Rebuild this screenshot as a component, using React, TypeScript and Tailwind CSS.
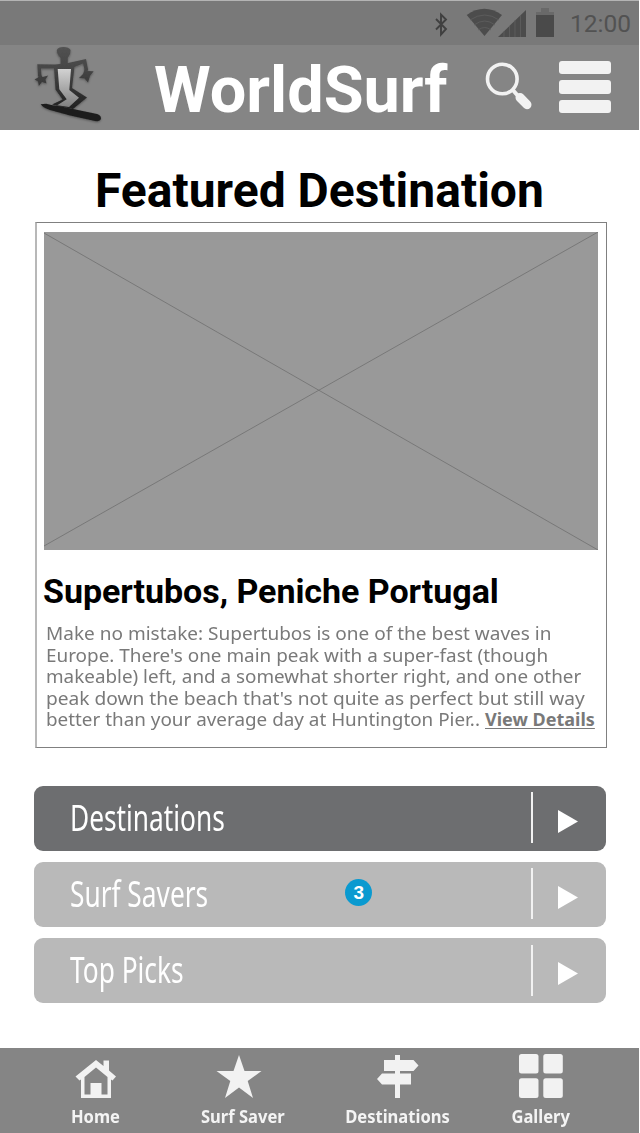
import type { ReactNode } from "react";

function Surfer() {
  return (
    <svg className="h-[85px] w-[80px] shrink-0" viewBox="30 45 80 85">
      <defs>
        <linearGradient id="body" gradientUnits="userSpaceOnUse" x1="0" y1="47" x2="0" y2="108">
          <stop offset="0" stopColor="#525252" />
          <stop offset="0.4" stopColor="#444" />
          <stop offset="1" stopColor="#222" />
        </linearGradient>
        <linearGradient id="belly" x1="0" y1="0" x2="0" y2="1">
          <stop offset="0" stopColor="#d2d2d2" />
          <stop offset="1" stopColor="#808080" />
        </linearGradient>
        <filter id="shade" x="-20%" y="-20%" width="140%" height="140%">
          <feDropShadow dx="0" dy="1" stdDeviation="1" floodColor="#000" floodOpacity="0.35" />
        </filter>
      </defs>
      <g filter="url(#shade)">
        <g fill="url(#body)">
          <path d="M56.800 50Q58 47 63.500 47T70.600 50Q71 54 67.800 58V64H60.500V58Q56.500 54 56.800 50z" />
          <path d="M37.300 64.200L55 64.500 67 63.200 86 59 88.200 70 84.800 71 83 63.500 74.500 67 72 88 87 97.500 73 109 52 104.500 62.500 99.500 55.500 89.500 54 68.500 41 68.500 41.500 76 38 76z" />
          <path d="M39.500 73L42.500 77 48.200 75.500 45.500 79.500 46.500 83.500 42 82 38.800 86 38 81.500 34.500 79.500 38 77.500z" />
          <path d="M85.500 67L88 71 93.700 71.300 90 76 88 82.500 84.500 78.500 79 78 83 74z" />
        </g>
        <path fill="#1d1d1d" d="M40.700 104.300L46 103.800Q52 105.500 60 106.200L97 114Q101 115 101 118.500 100 121.800 95 121L70 115.500 50 110Q43 108 40.700 104.300z" />
      </g>
      <path fill="url(#belly)" d="M57.700 69H71L69.300 90 79 97.700 69 107 57.300 105.300 66.700 99.300 59.300 89.300z" />
    </svg>
  );
}

function StatusIcons() {
  return (
    <svg className="h-[45px] w-[130px]" viewBox="430 0 130 45">
      <path d="M436 19l10 10-5 5.500v-20l5 5-10 10" fill="none" stroke="#404040" strokeWidth="1.900" />
      <path d="M466.700 15q17.500-12.500 35.300 0l-17.500 21z" fill="#4c4c4c" />
      <path d="M470 20q15-10 29 0M474 25q11-8 21 0M478 30q7-5 13 0" fill="none" stroke="#5f5f5f" strokeWidth="0.800" />
      <path d="M498 37l28-27v27z" fill="#4c4c4c" />
      <path d="M504 31v6M509.500 26v11M515 20v17M520.500 15v22" stroke="#5f5f5f" strokeWidth="0.800" />
      <path d="M536 12h18v25h-18z" fill="#4a4a4a" />
      <path d="M541 8h8v4h5v3h-18v-3h5z" fill="#696969" />
    </svg>
  );
}

function SearchIcon() {
  return (
    <svg className="h-[52px] w-[50px]" viewBox="484 58 50 52">
      <circle cx="502.300" cy="79" r="14.800" fill="none" stroke="#f2f2f2" strokeWidth="3.600" />
      <path d="M512 89l6 7" stroke="#f2f2f2" strokeWidth="4" />
      <path d="M520 97.500l7 7.200" stroke="#f2f2f2" strokeWidth="9" strokeLinecap="round" />
    </svg>
  );
}

function MenuIcon() {
  return (
    <div className="flex w-[52px] flex-col gap-[6px]">
      <span className="h-[13.300px] rounded-[3px] bg-[#f2f2f2]" />
      <span className="h-[13.300px] rounded-[3px] bg-[#f2f2f2]" />
      <span className="h-[13.300px] rounded-[3px] bg-[#f2f2f2]" />
    </div>
  );
}

function Header() {
  return (
    <header className="mr-px h-[130px] border-t border-[#b4b4b4] bg-[#858585]">
      <div className="flex h-[44px] items-center justify-end bg-[#797979] pr-[9px]">
        <div className="-mt-px mr-[10px] h-[45px]"><StatusIcons /></div>
        <span className="mt-[1px] w-[60px] whitespace-nowrap font-[Roboto,sans-serif] text-[24.500px] leading-[30px] text-[#525252]">12:00</span>
      </div>
      <div className="flex h-[85px] items-start pl-[30px]">
        <Surfer />
        <h1 className="mt-[7px] ml-[44px] w-[300px] whitespace-nowrap font-[Roboto,sans-serif] text-[64.800px] leading-[76px] font-bold text-white">WorldSurf</h1>
        <div className="mt-[13px] ml-[30px]"><SearchIcon /></div>
        <div className="mt-[16px] ml-[25px]"><MenuIcon /></div>
      </div>
    </header>
  );
}

function Featured() {
  const line = "block w-max origin-left whitespace-nowrap";
  return (
    <section>
      <h2 className="mt-[33px] ml-[95px] h-[59px] whitespace-nowrap font-[Roboto,sans-serif] text-[48px] leading-[56px] font-bold text-black">Featured Destination</h2>
      <article className="ml-[35px] h-[526px] w-[572px] border border-l-2 border-[#808080] border-l-[#b8b8b8] pt-[9px] pl-[7px]">
        <svg className="block h-[318px] w-[554px] bg-[#999]" viewBox="0 0 554 318">
          <path d="M0 1l554 317M0 314L554 0" stroke="#707070" strokeWidth="0.800" />
        </svg>
        <h3 className="mt-[20px] -ml-px h-[43px] whitespace-nowrap font-[Roboto,sans-serif] text-[34px] leading-[42px] font-bold tracking-[-0.040px] text-black">Supertubos, Peniche Portugal</h3>
        <div className="mt-[10px] ml-[2px] font-['Noto_Sans',sans-serif] text-[18px] leading-[21.600px] text-[#797979]">
          <span className={`${line} scale-x-[1.056]`}>Make no mistake: Supertubos is one of the best waves in</span>
          <span className={`${line} scale-x-[1.050]`}>Europe. There's one main peak with a super-fast (though</span>
          <span className={`${line} scale-x-[1.047]`}>makeable) left, and a somewhat shorter right, and one other</span>
          <span className={`${line} scale-x-[1.063]`}>peak down the beach that's not quite as perfect but still way</span>
          <div className="flex">
            <span className="w-[439px]"><span className={`${line} scale-x-[1.048]`}>better than your average day at Huntington Pier..</span></span>
            <a className="font-bold whitespace-nowrap underline decoration-1 underline-offset-2">View Details</a>
          </div>
        </div>
      </article>
    </section>
  );
}

function MenuRow({ label, dark = false, badge }: { label: string; dark?: boolean; badge?: string }) {
  return (
    <div className={`flex h-[64.500px] w-[572px] items-center rounded-[9px] ${dark ? "bg-[#6d6e70]" : "bg-[#b9b9b9]"}`}>
      <div className="w-[311px] pl-[36px]">
        <span className="-mt-[3px] block w-max origin-left scale-x-[0.740] whitespace-nowrap font-['Noto_Sans',sans-serif] text-[35.500px] leading-[48px] text-white">{label}</span>
      </div>
      <div className="w-[186px]">
        {badge && (
          <span className="-mt-[4px] flex size-[27px] items-center justify-center rounded-full bg-[#0a9ad0] font-['Liberation_Sans',sans-serif] text-[19px] leading-none font-bold text-white">{badge}</span>
        )}
      </div>
      <span className="-mt-px h-[51px] w-[1.500px] bg-[#f2f2f2]" />
      <svg className="mt-[6px] ml-[25px] h-[23px] w-[20px]" viewBox="0 0 20 23">
        <path d="M0 0l20 11.500L0 23z" fill="white" />
      </svg>
    </div>
  );
}

function NavItem({ label, children, className }: { label: string; children: ReactNode; className: string }) {
  return (
    <a className={`flex flex-col items-center ${className}`}>
      {children}
      <span className="mt-[1px] block w-max scale-x-[0.895] whitespace-nowrap font-['Noto_Sans',sans-serif] text-[18.500px] leading-[26px] font-bold text-[#f4f4f4]">{label}</span>
    </a>
  );
}

function BottomNav() {
  return (
    <nav className="mt-[45.100px] mr-px flex h-[86px] bg-[#858585] pt-[5px]">
      <NavItem label="Home" className="ml-[35px] w-[121px]">
        <svg className="h-[49px] w-[44px]" viewBox="74 1053 44 49">
          <path fill="#f2f2f2" fillRule="evenodd" d="M96 1060l7.500 6v-5.500h5.500v10l7 6-3.500 4-1.500-1v18.500H81v-18.500l-1.500 1-4-4zm0 7.500l-11.500 9.500v17.500h6v-11.500h11v11.500h6v-17.500z" />
        </svg>
      </NavItem>
      <NavItem label="Surf Saver" className="ml-[22px] w-[130px]">
        <svg className="h-[49px] w-[50px] overflow-visible" viewBox="218 1053 50 49">
          <path fill="#f2f2f2" d="M239 1055l5.500 16h17l-13.800 10 5.300 17-14-10.500-14 10.500 5.300-17-13.800-10h17z" />
        </svg>
      </NavItem>
      <NavItem label="Destinations" className="ml-[24px] w-[130px]">
        <svg className="h-[49px] w-[46px]" viewBox="374 1053 46 49">
          <path fill="#f2f2f2" d="M395 1055h5v5h13.500l5 5.500-5 5.500h-13.500v2.500h11v11h-11v13.500h-5v-13.500h-13l-5-5.500 5-5.500h13V1071h-11v-11h11z" />
        </svg>
      </NavItem>
      <NavItem label="Gallery" className="ml-[18px] w-[121px]">
        <svg className="h-[49px] w-[46px]" viewBox="518 1053 46 49">
          <g fill="#f2f2f2">
            <rect x="519" y="1054" width="19.500" height="19.500" rx="2.500" />
            <rect x="543.300" y="1054" width="19.500" height="19.500" rx="2.500" />
            <rect x="519" y="1078.300" width="19.500" height="19.700" rx="2.500" />
            <rect x="543.300" y="1078.300" width="19.500" height="19.700" rx="2.500" />
          </g>
        </svg>
      </NavItem>
    </nav>
  );
}

export default function App() {
  return (
    <main className="h-[1133px] w-[640px] overflow-hidden bg-white">
      <Header />
      <Featured />
      <div className="mt-[38px] ml-[34.300px] flex flex-col gap-[11.700px]">
        <MenuRow label="Destinations" dark />
        <MenuRow label="Surf Savers" badge="3" />
        <MenuRow label="Top Picks" />
      </div>
      <BottomNav />
    </main>
  );
}
